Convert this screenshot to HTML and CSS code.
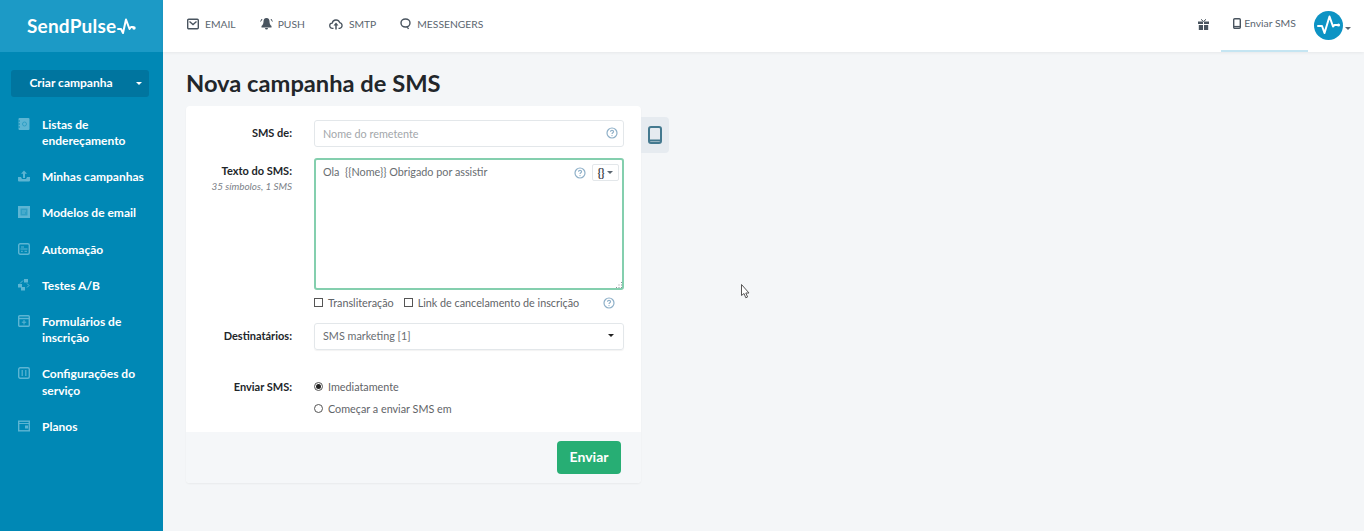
FILE: index.html
```html
<!DOCTYPE html>
<html lang="pt">
<head>
<meta charset="utf-8">
<title>SendPulse</title>
<link rel="stylesheet" href="styles.css">
</head>
<body>
<div class="app">
  <aside class="sidebar">
    <div class="brand">
      <span class="brand-name">SendPulse</span>
      <svg class="brand-pulse" viewBox="0 0 19 16" width="19" height="16"><path d="M1 11h3l2 4 3-13.500 3.500 9.500 1.500-2h2" fill="none" stroke="#fff" stroke-width="2" stroke-linejoin="round" stroke-linecap="round"/><circle cx="17" cy="10" r="1.700" fill="#fff"/></svg>
    </div>
    <div class="create">
      <span class="create-label">Criar campanha</span>
      <span class="create-caret"><i class="caret caret-white"></i></span>
    </div>
    <nav class="menu">
      <a class="menu-item"><svg class="menu-icon" viewBox="0 0 12 12"><rect x="0.500" y="0" width="11" height="12" rx="1" fill="#5db5d3"/><circle cx="6.500" cy="6" r="2" fill="none" stroke="#2f9fc5"/><path d="M.5 3h1.500M.5 6h1.500M.5 9h1.500" stroke="#0088b5"/></svg><span>Listas de endereçamento</span></a>
      <a class="menu-item"><svg class="menu-icon" viewBox="0 0 12 12"><path d="M0 7h3l1 2h4l1-2h3v3.500a1 1 0 0 1-1 1H1a1 1 0 0 1-1-1z" fill="#5db5d3"/><path d="M6 8V2" stroke="#5db5d3" stroke-width="2"/><path d="M3 3.800L6 .5l3 3.300z" fill="#5db5d3"/></svg><span>Minhas campanhas</span></a>
      <a class="menu-item"><svg class="menu-icon" viewBox="0 0 12 12"><rect x="0" y="0" width="12" height="12" fill="#5db5d3"/><path d="M2.500 2.500h7v7h-7z" fill="#2f9fc5"/><path d="M4 5h4M4 7h3" stroke="#5db5d3"/></svg><span>Modelos de email</span></a>
      <a class="menu-item"><svg class="menu-icon" viewBox="0 0 12 12"><rect x=".7" y=".7" width="10.600" height="10.600" rx="1.500" fill="none" stroke="#5db5d3" stroke-width="1.400"/><path d="M2.500 6h7" stroke="#5db5d3"/><path d="M3 8.300h1.800M6.500 8.300h2.500M3 4h3" stroke="#5db5d3"/></svg><span>Automação</span></a>
      <a class="menu-item"><svg class="menu-icon" viewBox="0 0 12 12"><rect x="0" y="5" width="4" height="3.500" fill="#5db5d3"/><rect x="3" y="8" width="4" height="3.500" fill="#5db5d3"/><rect x="6" y="0" width="4" height="3.500" fill="#5db5d3"/><path d="M2 4.500L5 1.500M9 4.500l2 2-2 2" fill="none" stroke="#5db5d3"/></svg><span>Testes A/B</span></a>
      <a class="menu-item"><svg class="menu-icon" viewBox="0 0 12 12"><rect x=".7" y=".7" width="10.600" height="10.600" rx="1" fill="none" stroke="#5db5d3" stroke-width="1.400"/><path d="M1 3.500h10" stroke="#5db5d3" stroke-width="1.400"/><path d="M6 5v4.500M3.800 7.200h4.400" stroke="#5db5d3"/></svg><span>Formulários de inscrição</span></a>
      <a class="menu-item"><svg class="menu-icon" viewBox="0 0 12 12"><rect x=".7" y=".7" width="10.600" height="10.600" rx="1.500" fill="none" stroke="#5db5d3" stroke-width="1.400"/><path d="M4.200 3v6M7.800 3v6" stroke="#5db5d3" stroke-width="1.200"/></svg><span>Configurações do serviço</span></a>
      <a class="menu-item"><svg class="menu-icon" viewBox="0 0 12 12"><rect x=".7" y="1.200" width="10.600" height="9.600" fill="none" stroke="#5db5d3" stroke-width="1.400"/><path d="M1 3.500h10" stroke="#5db5d3"/><rect x="7" y="5.500" width="3" height="3" fill="#5db5d3"/></svg><span>Planos</span></a>
    </nav>
  </aside>
  <div class="main">
    <header class="topbar">
      <nav class="channels">
        <a class="channel"><svg width="12" height="12" viewBox="0 0 12 12"><rect x="0.700" y="1.200" width="10.600" height="9.600" rx="1" fill="none" stroke="#49545f" stroke-width="1.400"/><path d="M2.500 3.500L6 6.500l3.500-3" fill="none" stroke="#49545f" stroke-width="1.400"/></svg>Email</a>
        <a class="channel channel-push"><svg width="13" height="13" viewBox="0 0 13 13"><path d="M6.500 1c2.200 0 3 1.800 3 3.500 0 2 .8 3.500 2 4.500v1.500h-10V9c1.200-1 2-2.500 2-4.500C3.500 2.800 4.300 1 6.500 1z" fill="#49545f"/><path d="M5 11h3a1.500 1.500 0 0 1-3 0z" fill="#49545f"/><path d="M2 2L.6 4.500M11 2l1.400 2.500" stroke="#49545f"/></svg>Push</a>
        <a class="channel"><svg width="14" height="12" viewBox="0 0 14 12"><path d="M4.500 10.300H3.500a2.600 2.600 0 0 1-.3-5.200 3.900 3.900 0 0 1 7.500-.5 2.900 2.900 0 0 1 0 5.700H9.500" fill="none" stroke="#49545f" stroke-width="1.300"/><path d="M7 11.500V6" stroke="#49545f" stroke-width="1.500"/><path d="M4.500 7.500L7 4.500l2.500 3z" fill="#49545f"/></svg>Smtp</a>
        <a class="channel"><svg width="11" height="12" viewBox="0 0 11 12"><path d="M5.500 1C8 1 10 2.700 10 5s-2 4-4.500 4S1 7.300 1 5s2-4 4.500-4zM7 8.500l1.500 2.500" fill="none" stroke="#49545f" stroke-width="1.400"/></svg>Messengers</a>
      </nav>
      <div class="top-right">
        <svg class="gift" width="11" height="11" viewBox="0 0 11 11"><path d="M0 2.500h5V5H0zM6 2.500h5V5H6zM.8 6H5v5H.8zM6 6h4.200v5H6z" fill="#49545f"/><path d="M5.500 2.500L3 .3M5.500 2.500L8 .3" stroke="#49545f"/></svg>
        <a class="send-tab"><svg width="8" height="11" viewBox="0 0 8 11"><rect x="0.700" y="0.700" width="6.600" height="9.600" rx="1" fill="none" stroke="#49545f" stroke-width="1.400"/><path d="M1 8.500h6" stroke="#49545f" stroke-width="1.200"/></svg>Enviar SMS</a>
        <div class="account">
          <svg width="29" height="29" viewBox="0 0 29 29"><circle cx="14.500" cy="14.500" r="14.500" fill="#0d93c4"/><path d="M4 15h4l2.500 7 5-16.500 3.500 10 1.500-1.500h3" fill="none" stroke="#fff" stroke-width="2" stroke-linejoin="round" stroke-linecap="round"/><circle cx="24.500" cy="14" r="1.600" fill="#fff"/></svg>
          <i class="caret caret-grey"></i>
        </div>
      </div>
    </header>
    <main class="content">
      <h1 class="title">Nova campanha de SMS</h1>
      <div class="editor">
        <form class="card">
          <div class="card-body">
            <div class="row row-sender">
              <div class="label">SMS de:</div>
              <div class="field input">
                <span class="placeholder">Nome do remetente</span>
                <svg class="help" viewBox="0 0 12 12"><use href="#help"/></svg>
              </div>
            </div>
            <div class="row row-text">
              <div class="label">Texto do SMS:<small class="hint">35 símbolos, 1 SMS</small></div>
              <div class="field-col">
                <div class="field textarea">
                  <span class="value">Ola&nbsp; {{Nome}} Obrigado por assistir</span>
                  <div class="textarea-tools">
                    <svg class="help" viewBox="0 0 12 12"><use href="#help"/></svg>
                    <span class="var-btn"><b>{}</b><i class="caret caret-grey"></i></span>
                  </div>
                  <svg class="resize" width="7" height="7" viewBox="0 0 7 7"><path d="M1 6.500h1M3.500 6.500h1M6 6.500h1M3.500 4h1M6 4h1M6 1.500h1" stroke="#8a9299"/></svg>
                </div>
                <div class="checks">
                  <label class="check"><i class="box"></i>Transliteração</label>
                  <label class="check"><i class="box"></i>Link de cancelamento de inscrição</label>
                  <svg class="help help-check" viewBox="0 0 12 12"><use href="#help"/></svg>
                </div>
              </div>
            </div>
            <div class="row row-recipients">
              <div class="label">Destinatários:</div>
              <div class="field select"><span class="value">SMS marketing [1]</span><i class="caret caret-dark"></i></div>
            </div>
            <div class="row row-send">
              <div class="label">Enviar SMS:</div>
              <div class="radios">
                <label class="radio"><i class="dot dot-on"></i>Imediatamente</label>
                <label class="radio"><i class="dot"></i>Começar a enviar SMS em</label>
              </div>
            </div>
          </div>
          <div class="card-footer"><button class="send" type="button">Enviar</button></div>
        </form>
        <div class="device-tab"><svg width="14" height="18" viewBox="0 0 14 18"><rect x="1" y="1" width="12" height="16" rx="2" fill="none" stroke="#44798f" stroke-width="2"/><path d="M1 14.500h12" stroke="#44798f" stroke-width="2"/></svg></div>
      </div>
    </main>
  </div>
</div>
<svg class="cursor" width="10" height="15" viewBox="0 0 10 15"><path d="M.5.500v11l2.500-2 1.800 4.300 1.800-.8-1.800-4h3.200z" fill="#fff" stroke="#555" stroke-width="1"/></svg>
<svg class="defs" width="0" height="0"><defs><g id="help"><circle cx="6" cy="6" r="5" fill="none" stroke="#8fb0c8" stroke-width="1.200"/><path d="M4.400 4.800C4.500 3.800 5.200 3.400 6 3.400c.9 0 1.600.5 1.600 1.300C7.600 5.800 6 5.800 6 7" fill="none" stroke="#8fb0c8" stroke-width="1.100"/><circle cx="6" cy="8.600" r=".7" fill="#8fb0c8"/></g></defs></svg>
</body>
</html>
```
FILE: styles.css
```css
* { box-sizing: border-box; }
html, body { margin: 0; height: 100%; overflow: hidden; }
body { font-family: "Lato", "Open Sans", sans-serif; background: #f4f6f8; color: #4a4f55; position: relative; }
.defs { position: absolute; }
.app { display: flex; height: 531px; }

.sidebar { width: 163px; flex: none; background: #0088b5; color: #fff; }
.brand { height: 52px; background: #1c9ac6; display: flex; align-items: center; padding: 0 0 2px 27px; }
.brand-name { font-size: 19px; font-weight: 700; letter-spacing: .2px; }
.brand-pulse { margin: 1px 0 0 1px; }
.create { margin: 18px 14px 0 11px; height: 27px; padding: 0 0 2px 2px; background: #00759f; border-radius: 3px; display: flex; align-items: center; font-size: 12px; font-weight: 700; }
.create-label { flex: 1; text-align: center; }
.create-caret { width: 20px; display: flex; justify-content: center; padding-top: 2px; }
.menu { padding-top: 10px; display: flex; flex-direction: column; }
.menu-item { display: flex; padding: 9.800px 16px 9.800px 18px; font-size: 12px; font-weight: 700; line-height: 16.500px; }
.menu-icon { width: 12px; height: 12px; flex: none; margin: 1px 12px 0 0; }

.caret { display: inline-block; width: 0; height: 0; border-left: 3px solid transparent; border-right: 3px solid transparent; border-top: 3px solid; }
.caret-white { color: #fff; }
.caret-grey { color: #5b6670; }
.caret-dark { color: #222; }

.main { flex: 1; min-width: 0; display: flex; flex-direction: column; }
.topbar { height: 52px; background: #fff; box-shadow: 0 1px 3px rgba(0,0,0,.06); display: flex; justify-content: space-between; padding-left: 24px; padding-right: 13px; }
.channels { display: flex; align-items: center; gap: 24px; padding-bottom: 5px; }
.channel { display: flex; align-items: center; gap: 6px; font-size: 10.300px; font-weight: 400; text-transform: uppercase; color: #5b6670; }
.channel-push { gap: 5px; }
.top-right { display: flex; align-items: stretch; }
.gift { align-self: center; margin: 0 12px 3px 0; }
.send-tab { width: 87px; padding-bottom: 4px; display: flex; align-items: center; justify-content: center; gap: 3px; font-size: 10.400px; color: #5b6670; border-bottom: 2px solid #c5e5f2; }
.account { display: flex; align-items: center; gap: 2px; margin-left: 6px; padding-bottom: 2px; }
.account .caret { margin-top: 6px; }

.content { flex: 1; padding: 16px 0 0 23px; }
.title { margin: 0 0 8px; font-size: 23.700px; line-height: 30px; font-weight: 700; color: #22262a; }
.editor { display: flex; align-items: flex-start; }
.card { width: 455px; background: #fff; border-radius: 4px; box-shadow: 0 1px 2px rgba(0,0,0,.05); overflow: hidden; }
.card-body { padding: 14px 17px 0 0; }
.row { display: flex; }
.label { width: 106px; margin-right: 22px; flex: none; text-align: right; font-size: 11px; font-weight: 700; color: #22262a; line-height: 16px; }
.hint { display: block; font-size: 9.900px; font-weight: 400; font-style: italic; color: #7b8188; line-height: 13px; margin-top: 1px; }
.field { border: 1px solid #e3e7ea; border-radius: 3px; font-size: 10.800px; position: relative; }
.row-sender .label { padding-top: 5px; }
.input { flex: 1; height: 27px; display: flex; align-items: center; justify-content: space-between; padding: 0 5px 1px 8px; }
.placeholder { color: #a2a6aa; }
.help { width: 12px; height: 12px; flex: none; }
.row-text { margin-top: 11px; }
.row-text .label { padding-top: 5px; }
.field-col { flex: 1; min-width: 0; }
.textarea { height: 132px; border: 2px solid #84cfae; padding: 4px 3px 0 7px; display: flex; justify-content: space-between; align-items: flex-start; }
.value { color: #686d71; line-height: 16px; }
.textarea-tools { display: flex; align-items: center; gap: 6px; }
.var-btn { width: 27px; height: 17px; border: 1px solid #e3e7ea; border-radius: 2px; display: flex; align-items: center; justify-content: center; gap: 3px; }
.var-btn b { font-size: 11px; line-height: 1; color: #3a4148; }
.resize { position: absolute; right: 0; bottom: 0; }
.checks { display: flex; align-items: center; height: 26px; padding-bottom: 1px; font-size: 10.800px; color: #5f6468; padding-right: 9px; }
.check { display: flex; align-items: center; gap: 5px; margin-right: 10px; white-space: nowrap; }
.box { width: 9px; height: 9px; border: 1px solid #555; display: block; }
.help-check { margin-left: auto; }
.row-recipients { margin-top: 7px; }
.row-recipients .label { padding-top: 5px; }
.select { flex: 1; height: 27px; display: flex; align-items: center; justify-content: space-between; padding: 0 9px 2px 8px; box-shadow: 0 1px 1px rgba(0,0,0,.05); }
.row-send { margin-top: 28px; }
.row-send .label { padding-top: 1px; }
.radios { display: flex; flex-direction: column; gap: 6px; font-size: 10.800px; color: #5f6468; }
.radio { display: flex; align-items: center; gap: 5px; height: 16px; }
.dot { width: 9px; height: 9px; border: 1px solid #555; border-radius: 50%; display: block; position: relative; }
.dot-on::after { content: ""; position: absolute; left: 1px; top: 1px; width: 5px; height: 5px; background: #222; border-radius: 50%; }
.card-footer { margin-top: 16px; height: 51px; background: #f5f7f9; display: flex; justify-content: flex-end; align-items: flex-start; padding: 9px 20px 0 0; }
.send { width: 64px; height: 33px; padding: 0 0 2px; background: #27ae74; color: #fff; border: 0; border-radius: 4px; font-family: inherit; font-size: 14px; font-weight: 700; }
.device-tab { margin-top: 11px; width: 28px; height: 36px; background: #e6ebf0; border-radius: 0 4px 4px 0; display: flex; align-items: center; justify-content: center; }
.cursor { position: absolute; left: 741px; top: 284px; }
```
